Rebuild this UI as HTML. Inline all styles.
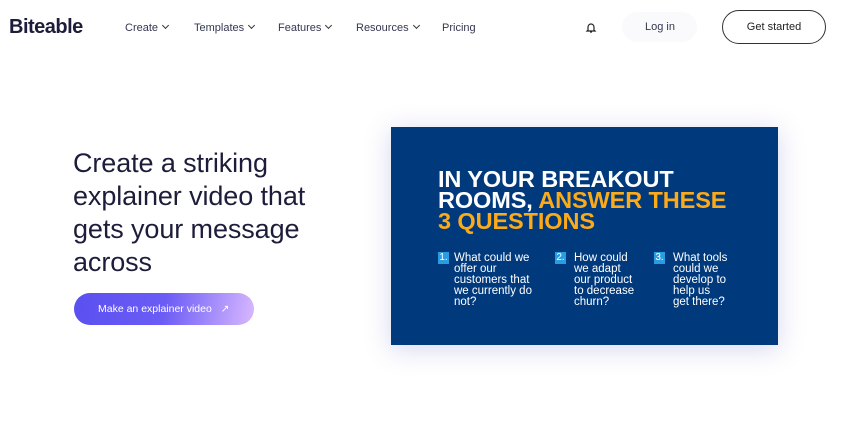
<!DOCTYPE html>
<html><head><style>
*{margin:0;padding:0;box-sizing:border-box}
body{width:850px;height:436px;background:#fff;font-family:"Liberation Sans",sans-serif;color:#1a1a3a;position:relative;overflow:hidden}
.a{position:absolute;white-space:nowrap}
.nav{font-size:11px;color:#333850;top:22px}
.chev{display:inline-block;width:5px;height:5px;border-right:1.3px solid #333;border-bottom:1.3px solid #333;transform:rotate(45deg);margin-left:5px;position:relative;top:-3px}
.h1{font-size:27px;line-height:33px;color:#1d1d3b;left:73px;top:147px;letter-spacing:-0.1px}
.card{left:391px;top:127px;width:387px;height:218px;background:#003a7d;box-shadow:0 4px 24px rgba(90,90,200,.25)}
.t{font-weight:bold;font-size:23.5px;line-height:21px;color:#fff;left:47px;top:42px;letter-spacing:-0.1px}
.y{color:#fbaa19}
.q{font-size:11.5px;line-height:11px;color:#fff;top:126px}
.n{position:absolute;top:125px;width:11px;height:12px;background:#2a9de0;color:#fff;font-size:10px;text-align:center;line-height:12px}
</style></head><body>
<div class="a" style="left:9px;top:16px;font-size:20px;font-weight:bold;color:#1d1d3b;letter-spacing:-0.5px">Biteable</div>
<div class="a nav" style="left:125px">Create<span class="chev"></span></div>
<div class="a nav" style="left:194px">Templates<span class="chev"></span></div>
<div class="a nav" style="left:278px">Features<span class="chev"></span></div>
<div class="a nav" style="left:356px">Resources<span class="chev"></span></div>
<div class="a nav" style="left:442px">Pricing</div>
<svg class="a" style="left:585px;top:21px" width="12" height="13" viewBox="0 0 12 13"><path d="M3 9V6a3 3 0 016 0v3l1 1H2z M5 11h2" fill="none" stroke="#222" stroke-width="1.2"/></svg>
<div class="a" style="left:622px;top:12px;width:75px;height:30px;border-radius:15px;background:#fafafc"></div>
<div class="a nav" style="left:645px;top:21px">Log in</div>
<div class="a" style="left:722px;top:10px;width:104px;height:34px;border:1px solid #333;border-radius:17px;font-size:11px;line-height:32px;text-align:center;color:#222">Get started</div>
<div class="a h1">Create a striking<br>explainer video that<br>gets your message<br>across</div>
<div class="a" style="left:74px;top:293px;width:180px;height:32px;border-radius:16px;background:linear-gradient(100deg,#5a50f0 0%,#6b5cf5 50%,#d8b8ff 100%);color:#fff;font-size:10.5px;line-height:32px;padding-left:24px">Make an explainer video &nbsp;&nbsp;↗</div>
<div class="a card">
<div class="a t">IN YOUR BREAKOUT<br>ROOMS, <span class="y">ANSWER THESE</span><br><span class="y">3 QUESTIONS</span></div>
<div class="n" style="left:47px">1.</div>
<div class="a q" style="left:63px">What could we<br>offer our<br>customers that<br>we currently do<br>not?</div>
<div class="n" style="left:164px">2.</div>
<div class="a q" style="left:183px">How could<br>we adapt<br>our product<br>to decrease<br>churn?</div>
<div class="n" style="left:263px">3.</div>
<div class="a q" style="left:282px">What tools<br>could we<br>develop to<br>help us<br>get there?</div>
</div>
</body></html>
